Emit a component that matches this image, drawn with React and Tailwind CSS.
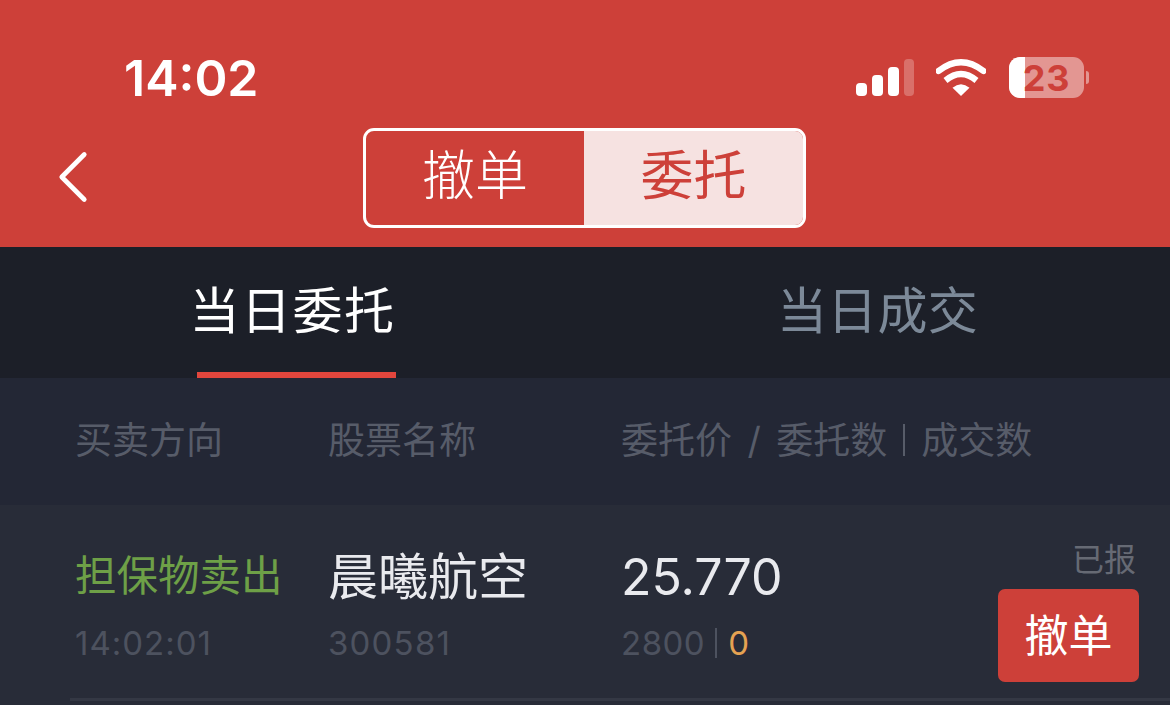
import { ChevronLeft } from 'lucide-react';

const cjk = "font-['Inter','Noto_Sans_CJK_SC',sans-serif]";

const StatusIcons = () => (
    <div className="flex items-center">
        {/* Signal */}
        <svg width="58" height="38" viewBox="0 0 58 38" className="block">
            <rect x="0" y="24" width="11" height="13" rx="4" fill="#fff" />
            <rect x="16" y="16" width="11" height="21" rx="4" fill="#fff" />
            <rect x="32" y="8" width="11" height="29" rx="4" fill="#fff" />
            <rect x="48" y="0" width="10" height="37" rx="4" fill="#fff" fillOpacity="0.25" />
        </svg>
        {/* Wifi */}
        <svg width="50" height="38" viewBox="0 0 50 38" className="ml-[22px] block">
            <path d="M25 37 L16.5 28.8 Q25 21.5 33.5 28.8 Z" fill="#fff" />
            <path d="M9.5 21.5 Q25 8.5 40.5 21.5" fill="none" stroke="#fff" strokeWidth="6.2" />
            <path d="M2.5 12 Q25 -5.5 47.5 12" fill="none" stroke="#fff" strokeWidth="6.2" strokeLinecap="round" />
        </svg>
        {/* Battery */}
        <div className="relative ml-[23px] flex items-center">
            <div className="relative h-[41px] w-[75px] overflow-hidden rounded-[11px] bg-white/45">
                <div className="h-full w-[16px] bg-white" />
            </div>
            <span className="absolute left-0 top-0 flex h-[41px] w-[75px] items-center justify-center font-['Inter',sans-serif] text-[36px] font-bold leading-none tracking-[0.8px] text-[#cd4039]">
                23
            </span>
            <div className="ml-[2px] h-[13px] w-[3px] rounded-r-[3px] bg-white/45" />
        </div>
    </div>
);

const App = () => {
    return (
        <div className={`flex h-[705px] w-[1170px] flex-col overflow-hidden bg-[#282c38] ${cjk}`}>
            {/* Red header */}
            <header className="h-[247px] shrink-0 bg-[#cd4039]">
                <div className="flex h-[128px] items-start justify-between pl-[124px] pr-[81px] pt-[49px]">
                    <span className="font-['Inter',sans-serif] text-[50px] font-semibold leading-[58px] text-white">14:02</span>
                    <div className="pt-[8px]">
                        <StatusIcons />
                    </div>
                </div>
                <div className="relative flex justify-center pr-[1px]">
                    <ChevronLeft className="absolute left-[28px] top-[4px] h-[90px] w-[90px] text-white" strokeWidth={1.25} />
                    <div className="flex h-[100px] w-[443px] overflow-hidden rounded-[11px] border-[3px] border-white text-[53px] font-light leading-none">
                        <div className="flex w-[218px] items-center justify-center pb-[4px] text-white">撤单</div>
                        <div className="flex flex-1 items-center justify-center bg-[#f6e2e1] pb-[4px] font-normal text-[#cd4039]">委托</div>
                    </div>
                </div>
            </header>

            {/* Tabs */}
            <nav className="flex h-[131px] shrink-0 bg-[#1c1f28] text-[50px] leading-none">
                <div className="flex w-[585px] flex-col items-center">
                    <span className="mt-[39px] tracking-[1.5px] text-white">当日委托</span>
                    <div className="mt-auto ml-[7px] h-[6px] w-[199px] bg-[#e2463d]" />
                </div>
                <div className="flex flex-1 justify-center">
                    <span className="mt-[39px] tracking-[0.3px] text-[#7c8998]">当日成交</span>
                </div>
            </nav>

            {/* Column heads */}
            <div className="flex h-[127px] shrink-0 items-center bg-[#232735] pb-[3px] pl-[75px] text-[37px] font-normal leading-none text-[#575c69]">
                <span className="w-[253px]">买卖方向</span>
                <span className="w-[293px]">股票名称</span>
                <span className="flex items-center whitespace-pre [word-spacing:5px]">
                    委托价 / 委托数
                    <span className="mx-[16px] h-[32px] w-[2px] bg-[#575c69]" />
                    成交数
                </span>
            </div>

            {/* Order row */}
            <div className="ml-[70px] flex h-[196px] shrink-0 border-b-[3px] border-[#343844]">
                <div className="flex w-[258px] flex-col pl-[5px] pt-[47px]">
                    <span className="text-[41.5px] font-normal leading-[48px] text-[#6ea047]">担保物卖出</span>
                    <span className="mt-[23px] font-['Inter',sans-serif] text-[33px] font-normal leading-[40px] tracking-[1px] text-[#4d525f]">14:02:01</span>
                </div>
                <div className="flex w-[293px] flex-col pt-[43px]">
                    <span className="text-[50px] font-normal leading-[58px] text-[#e9eaee]">晨曦航空</span>
                    <span className="mt-[17px] font-['Inter',sans-serif] text-[33px] font-normal leading-[40px] tracking-[1.2px] text-[#4d525f]">300581</span>
                </div>
                <div className="flex w-[376px] flex-col pt-[43px]">
                    <span className="font-['Inter',sans-serif] text-[50px] font-normal leading-[58px] text-[#e9eaee]">25.770</span>
                    <span className="mt-[17px] flex items-center font-['Inter',sans-serif] text-[33px] font-normal leading-[40px] tracking-[0.5px] text-[#4d525f]">
                        2800
                        <span className="ml-[10px] mr-[11px] h-[30px] w-[2px] bg-[#4d525f]" />
                        <span className="text-[#e5a252]">0</span>
                    </span>
                </div>
                <div className="flex flex-1 flex-col items-end pr-[31px] pt-[36px]">
                    <span className="mr-[3px] text-[32px] font-normal leading-[38px] text-[#666a74]">已报</span>
                    <button className="mt-[10px] flex h-[93px] w-[141px] items-center justify-center rounded-[7px] bg-[#cd4039] text-[44px] font-normal leading-none text-white">
                        撤单
                    </button>
                </div>
            </div>
        </div>
    );
};

export default App;
